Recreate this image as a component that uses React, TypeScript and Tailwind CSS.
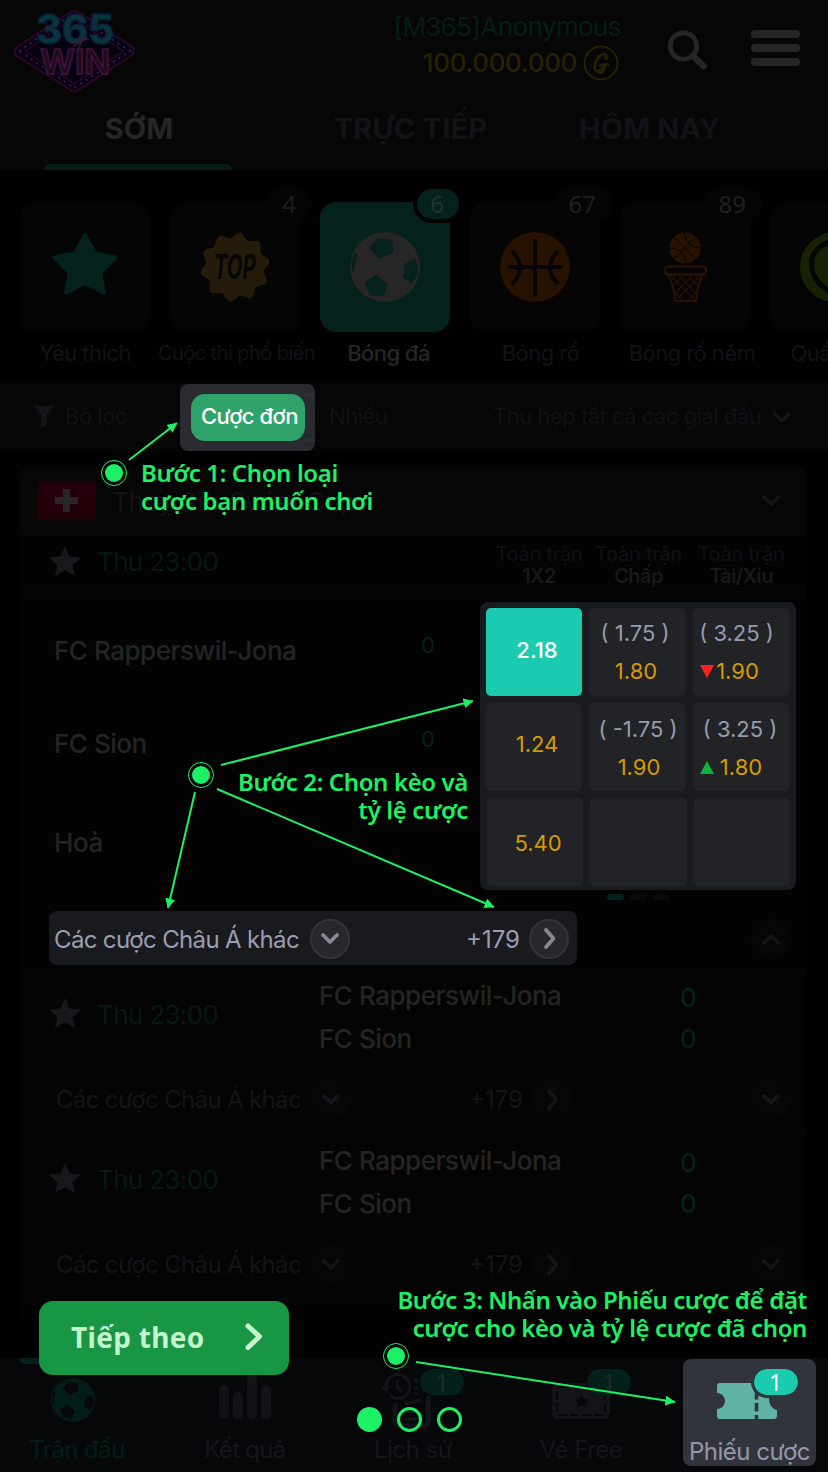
import React from "react";

type IconProps = { className?: string };

function Chevron({ dir, className }: { dir: "down" | "up" | "right"; className?: string }) {
  const d = { down: "M2 2 L9 9 L16 2", up: "M2 9 L9 2 L16 9", right: "M6 -3 L13.5 5.5 L6 14" }[dir];
  return (
    <svg className={className} width="18" height="11" viewBox="0 0 18 11" overflow="visible" fill="none" stroke="currentColor" strokeWidth="3.800" strokeLinecap="round" strokeLinejoin="round">
      <path d={d} />
    </svg>
  );
}

function StarIcon({ className }: IconProps) {
  return (
    <svg className={className} viewBox="0 0 70 70" fill="currentColor" stroke="currentColor" strokeWidth="4" strokeLinejoin="round">
      <path d="M35 3 L45 21.5 L65.5 25.5 L50.3 40.8 L53.8 60.5 L35 51 L16.2 60.5 L19.7 40.8 L4.5 25.5 L25 21.5 Z" />
    </svg>
  );
}

function SmallStar({ className }: IconProps) {
  return (
    <svg className={className} width="32" height="30" viewBox="0 0 32 30" fill="currentColor">
      <path d="M16 0 L20.6 10.4 L32 11.6 L23.6 19.3 L26 30 L16 24.6 L6 30 L8.4 19.3 L0 11.6 L11.4 10.4 Z" />
    </svg>
  );
}

function SoccerIcon({ size, patch }: { size: number; patch: string }) {
  return (
    <svg width={size} height={size} viewBox="0 0 70 70">
      <circle cx="35" cy="35" r="35" fill="currentColor" />
      <g fill={patch} stroke={patch} strokeWidth="1" strokeLinejoin="round">
        <path d="M20 16.3 L27.5 6.3 L41.5 8.2 L43 20.3 L28.7 26 Z" />
        <path d="M26.3 43.5 L37 52.7 L33.2 63.7 L20.9 62.8 L15 50.2 Z" />
        <path d="M55.5 32 L64.6 27.5 Q68 34 67.5 41 L62 51.3 L53.5 45.6 Z" />
        <path d="M4.5 22 Q7.5 20 6.5 24 Q4.5 30 4 38 Q2.5 41 2 38 Q1.5 29 4.5 22 Z" />
      </g>
    </svg>
  );
}

function TopIcon() {
  const pts = Array.from({ length: 61 }, (_, i) => {
    const a = (i / 60) * Math.PI * 2;
    const r = 32 + 3 * Math.cos(10 * (a + 1.43));
    return `${(35 + r * Math.cos(a)).toFixed(1)} ${(35 + r * Math.sin(a)).toFixed(1)}`;
  });
  return (
    <svg width="70" height="70" viewBox="0 0 70 70">
      <path d={`M${pts.join("L")}Z`} fill="#241b0a" />
      <text x="35" y="47.500" textAnchor="middle" transform="translate(13.700 0) scale(.6 1)" className="font-['Inter'] text-[34px] font-bold italic" fill="#060606">TOP</text>
    </svg>
  );
}

function BasketballIcon() {
  return (
    <svg width="70" height="70" viewBox="0 0 70 70">
      <circle cx="35" cy="35" r="35" fill="#271202" />
      <path d="M35 9 V62 M9 35 H61 M13 20 Q27 35 13 51 M57 20 Q43 35 57 51" fill="none" stroke="#060606" strokeWidth="4" strokeLinecap="round" />
    </svg>
  );
}

function HoopIcon() {
  return (
    <svg width="70" height="70" viewBox="0 0 70 70">
      <circle cx="35" cy="16" r="15.7" fill="#271202" />
      <path d="M24 5 L46 27 M24 27 L46 5 M34 0 Q36 16 51 16 M19 16 Q35 16 36 32" fill="none" stroke="#060606" strokeWidth="1" />
      <g fill="none" stroke="#271202">
        <rect x="15" y="34.500" width="41" height="8" rx="3" strokeWidth="2.500" />
        <path d="M18 43 Q24 53 25 69 H46 Q47 53 53 43" strokeWidth="2" />
        <path d="M20 43 L45 68 M28 43 L47 62 M37 43 L49 55 M45 43 L51 49 M51 43 L26 68 M43 43 L24 62 M34 43 L22 55 M26 43 L21 49 M24.500 60 L32 68 M46.500 60 L39 68" strokeWidth="1.100" />
      </g>
    </svg>
  );
}

function TennisIcon() {
  return (
    <svg width="70" height="70" viewBox="0 0 70 70">
      <circle cx="35" cy="35" r="35" fill="#182104" />
      <path d="M34 9 C4 14 4 48 34 62" fill="none" stroke="#060606" strokeWidth="5" />
    </svg>
  );
}

function TicketIcon() {
  return (
    <svg width="60" height="36" viewBox="0 0 60 36">
      <path d="M3 0 H34 Q36 9 41.500 13 L52 15 Q52 25 60 27 V33 Q60 36 57 36 H3 Q0 36 0 33 V26 A8 8 0 0 0 0 10 V3 Q0 0 3 0 Z" fill="#61b3a8" />
      <path d="M37.700 8 H41.300 V16.500 H37.700 Z M37.700 20 H41.300 V28.500 H37.700 Z M37.700 32 H41.300 V36 H37.700 Z" fill="#32343c" />
    </svg>
  );
}

function FreeTicketIcon() {
  return (
    <svg width="60" height="36" viewBox="0 0 60 36">
      <path d="M4 0 H56 Q57 3 60 4 L58 8 L60 12 L58 16 L60 20 L58 24 L60 28 L58 31 Q57 33 56 36 H4 Q3 33 0 32 L2 28 L0 24 L2 20 L0 16 L2 12 L0 8 L2 4 Z" fill="#121418" />
      <rect x="6" y="4" width="48" height="28" rx="3" fill="none" stroke="#060709" strokeWidth="2" strokeDasharray="9 3" />
      <path d="M30.500 11 L32.500 16 L38 16.300 L34 20 L35.300 25 L30.500 22 L26 25 L27.200 20 L23 16.300 L28.500 16 Z" fill="#060709" />
    </svg>
  );
}

function HistoryIcon() {
  return (
    <svg width="56" height="58" viewBox="0 0 56 58" fill="none" stroke="#121418">
      <path d="M5 15 A12 12 0 1 1 9.500 24" strokeWidth="3" />
      <path d="M-1 14 H11 L5 20.500 Z" fill="#121418" stroke="none" />
      <path d="M16.500 8 V16 L21 19.500" strokeWidth="2.500" />
      <path d="M35 7 V11 M35 15 V18 M35 20.500 V23" strokeWidth="4" />
      <path d="M14 31 V48 Q14 54 20 54 H42 Q47.500 54 47.500 48 V24" strokeWidth="5" />
      <path d="M24 32 L40 28 M22 40 H40 M24 47 H38" strokeWidth="3.500" />
    </svg>
  );
}

function Logo() {
  const bulbs = "M19 51 L72 14 L130 51 L74 88 Z";
  return (
    <svg width="124" height="86" viewBox="12 8 124 86" overflow="visible">
      <path d="M17 47 L69 13 Q74 9 80 13 L131 46 Q137 51 131 56 L80 89 Q74 94 69 89 L17 56 Q12 51 17 47 Z" fill="#0a0318" stroke="#2c0724" strokeWidth="2" />
      <path d={bulbs} fill="#03020f" stroke="#2c0724" strokeWidth="1.500" transform="translate(9 6.200) scale(.88)" />
      <path d={bulbs} fill="none" stroke="#30364a" strokeWidth="1.600" strokeDasharray="1.600 5" />
      <text x="36" y="44" textLength="78" lengthAdjust="spacingAndGlyphs" className="font-['Inter'] text-[41px] font-extrabold" fill="#0b333d" stroke="#061f38" strokeWidth="1.300">365</text>
      <text x="40" y="74" textLength="70" lengthAdjust="spacingAndGlyphs" className="font-['Inter'] text-[34px] font-bold" fill="#220a1e" stroke="#431440" strokeWidth="1.400">WIN</text>
      <path d="M71 43 L89 39 M73 47 L87 37 M79 48 L83 37" stroke="#3a1c35" strokeWidth="1.500" />
    </svg>
  );
}

function Header() {
  return (
    <header className="h-[170px] bg-[#060606]">
      <div className="flex h-[100px] items-start pl-3">
        <div className="pt-2"><Logo /></div>
        <div className="ml-auto flex flex-col items-end pt-[9px]">
          <div className="text-[26px] leading-9 tracking-[-0.6px] text-[#031d18]">[M365]Anonymous</div>
          <div className="mr-[2px] flex h-9 items-center gap-[6px] text-[26px] font-medium leading-9 text-[#262200]">
            <span className="tracking-[-0.35px]">100.000.000</span>
            <svg width="36" height="36" viewBox="0 0 36 36">
              <circle cx="18" cy="18" r="16.500" fill="none" stroke="#262200" strokeWidth="2" />
              <path d="M24 12 C25 14 22 15 23 11 C22 6 13 12 12 20 C10 29 19 27 21 21 M17 20.500 Q21 19 25 19.500 M22 20 Q21 28 17 28" fill="none" stroke="#262200" strokeWidth="2.700" strokeLinecap="round" />
            </svg>
          </div>
        </div>
        <svg className="ml-[46px] mt-[29px]" width="41" height="42" viewBox="0 0 41 42" fill="none" stroke="#262626">
          <circle cx="16.500" cy="17" r="13.200" strokeWidth="4.800" />
          <path d="M26 27 L36.500 37" strokeWidth="6.500" strokeLinecap="round" />
        </svg>
        <div className="ml-[43px] mr-7 mt-[30px] flex w-[49px] flex-col gap-[6px]">
          {[0, 1, 2].map((i) => <div key={i} className="h-2 rounded-full bg-[#262626]" />)}
        </div>
      </div>
      <nav className="flex h-[70px] pl-[44px] text-[29px] font-bold leading-[58px] text-[#121317]">
        <div className="flex w-[188px] flex-col items-center justify-between">
          <span className="-mr-[2px] text-[#262626]">SỚM</span>
          <span className="h-[6px] w-full rounded-t-md bg-[#0a1c1a]" />
        </div>
        <div className="w-[357px] text-center tracking-[0.2px]">TRỰC TIẾP</div>
        <div className="w-[122px] whitespace-nowrap"><span className="-ml-[10px] tracking-[0.1px]">HÔM NAY</span></div>
      </nav>
    </header>
  );
}

type Sport = { label: string; icon: React.ReactNode; count?: string; active?: boolean; labelClass: string };

const sports: Sport[] = [
  { label: "Yêu thích", icon: <StarIcon className="size-[70px] text-[#05211c]" />, labelClass: "text-[22px]" },
  { label: "Cuộc thi phổ biến", icon: <TopIcon />, count: "4", labelClass: "text-[20px] ml-[3px]" },
  { label: "Bóng đá", icon: <SoccerIcon size={70} patch="#05211c" />, count: "6", active: true, labelClass: "text-[22px] ml-[7px] font-medium text-[#262626]" },
  { label: "Bóng rổ", icon: <BasketballIcon />, count: "67", labelClass: "text-[22px] ml-[11px]" },
  { label: "Bóng rổ ném", icon: <HoopIcon />, count: "89", labelClass: "text-[22px] ml-[14px]" },
  { label: "Quần vợt", icon: <TennisIcon />, labelClass: "text-[22px]" },
];

function Sports() {
  return (
    <section className="flex h-[213px] gap-5 overflow-hidden bg-[#010101] pl-5 pt-8 text-[#111216]">
      {sports.map((s) => (
        <div key={s.label} className="flex w-[130px] shrink-0 flex-col items-center">
          <div className={s.active ? "relative flex size-[130px] items-center justify-center rounded-2xl bg-[#05211c] text-[#262626]" : "relative flex size-[130px] items-center justify-center rounded-2xl bg-[#050505]"}>
            {s.icon}
            {s.count && (
              <span className={s.active
                ? "absolute -right-[13px] -top-[17px] flex h-[38px] w-[50px] items-center justify-center rounded-full border-4 border-[#010101] bg-[#05211c] pr-[2px] font-['Noto_Sans'] text-[24px] text-[#24312f]"
                : "absolute -right-[12px] -top-[17px] flex h-[38px] min-w-[46px] items-center justify-center rounded-full border-4 border-[#030404] bg-[#050505] px-3 font-['Noto_Sans'] text-[24px] text-[#1e1f20]"}>
                {s.count}
              </span>
            )}
          </div>
          <div className={`whitespace-nowrap leading-[42px] tracking-[-0.55px] ${s.labelClass}`}>{s.label}</div>
        </div>
      ))}
    </section>
  );
}

function FilterBar() {
  return (
    <section className="flex h-[68px] items-center bg-[#060606] pl-5 text-[22px] tracking-[-0.5px] text-[#101114]">
      <div className="flex h-[47px] w-[135px] items-center rounded-2xl border border-[#080808] pl-[13px]">
        <svg width="20" height="22" viewBox="0 0 20 22" fill="#131417"><path d="M0 0 H20 L13 9 V18 L7 22 V9 Z" /></svg>
        <span className="-mt-[2px] ml-[11px]">Bộ lọc</span>
      </div>
      <div className="ml-[25px] flex h-[67px] w-[135px] items-center rounded-lg bg-[#2a2b30]">
        <div className="ml-[11px] flex h-[47px] w-[114px] items-center justify-center rounded-[14px] bg-[#2fa369] text-[22px] font-medium text-white"><span className="-mt-[2px] ml-[3px]">Cược đơn</span></div>
        <div className="h-[47px] flex-1 border-y-2 border-[#313237]" />
      </div>
      <div className="flex h-[47px] w-[103px] items-center rounded-r-2xl border border-l-0 border-[#080808] pb-[2px] pl-[14px]">Nhiều</div>
      <div className="ml-[62px] flex h-[47px] w-[325px] items-center rounded-2xl border border-[#080808] pl-3">
        <span className="-mt-[2px] whitespace-nowrap">Thu hẹp tất cả các giải đấu</span>
        <Chevron dir="down" className="ml-3 text-[#15161a]" />
      </div>
    </section>
  );
}

function RoundButton({ dir, lit }: { dir: "down" | "up" | "right"; lit?: boolean }) {
  return (
    <span className={lit
      ? "flex size-10 shrink-0 items-center justify-center rounded-full border-2 border-[#333439] bg-[#27282c] text-[#868892]"
      : "flex size-10 shrink-0 items-center justify-center rounded-full border border-[#080808] bg-[#060606] text-[#141519]"}>
      <Chevron dir={dir} />
    </span>
  );
}

function OddsCell({ line, price, trend, className }: { line?: string; price?: string; trend?: "up" | "down"; className?: string }) {
  return (
    <div className={`flex h-[88px] flex-col items-center justify-center rounded-[5px] ${className ?? ""}`}>
      {line && <div className="-ml-[2px] whitespace-pre text-[22px] leading-[38px] text-[#989cae]">{line}</div>}
      {price && (
        <div className="relative flex items-center text-[22px] leading-[38px]">
          {trend && (
            <svg className={trend === "up" ? "absolute -left-[20px]" : "absolute -left-[16px]"} width="14" height="13" viewBox="0 0 14 13">
              <path d={trend === "up" ? "M0 13 L7 0 L14 13 Z" : "M0 0 H14 L7 13 Z"} fill={trend === "up" ? "#0cb43b" : "#ff2020"} />
            </svg>
          )}
          {price}
        </div>
      )}
    </div>
  );
}

function OddsBoard() {
  return (
    <div className="flex h-[288px] w-[316px] flex-col gap-[7px] rounded-lg bg-[#1a1b1f] p-[6px] text-[#d59a04]">
      <div className="grid grid-cols-[96px_97px_97px] gap-[7px]">
        <OddsCell price="2.18" className="bg-[#1acbb0] pb-1 pl-[6px] font-medium text-white" />
        <OddsCell line="( 1.75 )" price="1.80" className="bg-[#222326] pr-[3px]" />
        <OddsCell line="( 3.25 )" price="1.90" trend="down" className="bg-[#222326] pr-[8px]" />
      </div>
      <div className="grid grid-cols-[96px_97px_97px] gap-[7px]">
        <OddsCell price="1.24" className="bg-[#222326] pb-[6px] pl-[6px]" />
        <OddsCell line="( -1.75 )" price="1.90" className="bg-[#222326] pl-[3px] pt-[2px]" />
        <OddsCell line="( 3.25 )" price="1.80" trend="up" className="bg-[#222326] pr-[1px] pt-[2px]" />
      </div>
      <div className="ml-px grid grid-cols-[96px_97px_96px] gap-[7px]">
        <OddsCell price="5.40" className="bg-[#222326] pl-[6px] pt-[2px]" />
        <OddsCell className="bg-[#222326]" />
        <OddsCell className="bg-[#222326]" />
      </div>
    </div>
  );
}

function CollapsedMatch() {
  return (
    <article className="h-[165px] border-b-2 border-[#060606] bg-[#040404]">
      <div className="flex h-[94px] pl-[29px]">
        <SmallStar className="mt-[28px] text-[#17181c]" />
        <span className="ml-4 w-[222px] pt-[27px] text-[26px] leading-9 tracking-[-0.65px] text-[#041910]">Thu 23:00</span>
        <div className="w-[361px] pt-[4px] text-[26px] font-medium leading-[43px] tracking-[-0.47px] text-[#242424]">
          <div>FC Rapperswil-Jona</div>
          <div>FC Sion</div>
        </div>
        <div className="pt-[7px] text-[26px] font-medium leading-[41px] text-[#04201b]">
          <div>0</div>
          <div>0</div>
        </div>
      </div>
      <div className="mx-[40px] mr-[68px] h-px bg-[#070707]" />
      <div className="flex h-[68px] items-center pl-[36px] text-[24px] text-[#131417]">
        <span className="w-[255px] whitespace-nowrap pt-[2px] tracking-[-0.65px]">Các cược Châu Á khác</span>
        <RoundButton dir="down" />
        <span className="ml-[118px] w-[63px] pt-[2px]">+179</span>
        <RoundButton dir="right" />
        <span className="ml-auto mr-[15px]"><RoundButton dir="down" /></span>
      </div>
    </article>
  );
}

function League() {
  return (
    <section className="mx-5 mt-4 w-[786px] rounded-t-lg bg-[#030303] pb-[20px]">
      <div className="flex h-[68px] items-center rounded-t-lg border-b-2 border-[#070707] bg-[#060606] pl-[17px]">
        <svg width="59" height="39" viewBox="0 0 59 39"><rect width="59" height="39" fill="#210008" /><path d="M18 16 H26 V8 H33 V16 H41 V23 H33 V31 H26 V23 H18 Z" fill="#262626" /></svg>
        <span className="ml-4 mt-[3px] text-[26px] tracking-[-0.3px] text-[#121317]">Thuỵ Sĩ - Swiss Cup</span>
        <span className="ml-auto mr-[15px]"><RoundButton dir="down" /></span>
      </div>
      <div className="flex h-[58px] border-b-2 border-[#070707] pl-[29px] text-[20px] leading-[22px] text-[#101116]">
        <SmallStar className="mt-[11px] text-[#17181c]" />
        <span className="ml-4 mt-[9px] w-[392px] text-[26px] leading-9 tracking-[-0.65px] text-[#041910]">Thu 23:00</span>
        {[["Toàn trận", "1X2", "w-[100px]"], ["Toàn trận", "Chấp", "w-[99px]"], ["Toàn trận", "Tài/Xỉu", "w-[106px]"]].map(([a, b, w]) => (
          <div key={b} className={`${w} pt-[8px] text-center tracking-[-0.25px]`}>
            <div>{a}</div>
            <div className="font-semibold tracking-[-0.6px] text-[#17181a]">{b}</div>
          </div>
        ))}
      </div>
      <div className="flex h-[318px] pl-[34px] pt-[9px]">
        <div className="w-[367px] pt-[26px] text-[26px] font-medium tracking-[-0.47px] text-[#242424]">
          <div className="h-[93px] leading-[46px]">FC Rapperswil-Jona</div>
          <div className="h-[99px] leading-[46px]">FC Sion</div>
          <div className="leading-[46px]">Hoà</div>
        </div>
        <div className="w-[59px] pt-[23px] text-[22px] text-[#04201b]">
          <div className="h-[94px] leading-[40px]">0</div>
          <div className="leading-[40px]">0</div>
        </div>
        <div className="flex flex-col items-center">
          <OddsBoard />
          <div className="mt-1 flex gap-[6px]">
            <span className="h-[6px] w-[17px] rounded-full bg-[#04201b]" />
            <span className="h-[6px] w-[17px] rounded-full bg-[#0a0a0a]" />
            <span className="h-[6px] w-[17px] rounded-full bg-[#0a0a0a]" />
          </div>
        </div>
      </div>
      <div className="flex h-[59px] border-b-2 border-[#060606] pl-[29px]">
        <div className="flex h-[54px] w-[528px] items-center rounded-lg bg-[#191a1e] pl-[5px] text-[24px] text-[#9a9eb0]">
          <span className="w-[256px] whitespace-nowrap pt-[4px] tracking-[-0.65px]">Các cược Châu Á khác</span>
          <span className="pt-px"><RoundButton dir="down" lit /></span>
          <span className="ml-[116px] w-[63px] pt-[4px]">+179</span>
          <span className="pt-px"><RoundButton dir="right" lit /></span>
        </div>
        <span className="ml-auto mr-[15px] mt-[8px]"><RoundButton dir="up" /></span>
      </div>
      <CollapsedMatch />
      <CollapsedMatch />
    </section>
  );
}

function BottomNav() {
  const badge = "absolute left-1/2 flex h-[26px] w-[44px] items-center justify-center rounded-full font-['Noto_Sans'] text-[23px] leading-none tracking-normal";
  return (
    <nav className="-mx-[7px] mt-auto grid h-[114px] w-[842px] shrink-0 grid-cols-[repeat(5,168px)] bg-[#060709] text-center text-[24px] tracking-[-0.5px] text-[#15161a]">
      <div className="relative flex flex-col items-center text-[#041c18]">
        <span className="absolute left-[26px] top-0 h-[6px] w-[116px] rounded-b-md bg-[#04201b]" />
        <span className="mr-[8px] mt-[20px] h-[54px]"><SoccerIcon size={44} patch="#060709" /></span>
        <span className="leading-9">Trận đấu</span>
      </div>
      <div className="flex flex-col items-center">
        <span className="mt-[14px] flex h-[47px] items-end gap-[4px]">
          <i className="h-[34px] w-[10px] rounded-full bg-[#121317]" />
          <i className="h-[27px] w-[10px] rounded-full bg-[#121317]" />
          <i className="h-[47px] w-[10px] rounded-full bg-[#121317]" />
          <i className="h-[34px] w-[10px] rounded-full bg-[#121317]" />
        </span>
        <span className="mt-[13px] leading-9 tracking-[-0.7px]">Kết quả</span>
      </div>
      <div className="relative flex flex-col items-center">
        <span className="ml-[-8px] mt-[14px] h-[60px]"><HistoryIcon /></span>
        <span className="leading-9">Lịch sử</span>
        <span className={`${badge} top-[11px] ml-[7px] bg-[#04201b] text-[#202b2a]`}>1</span>
      </div>
      <div className="relative flex flex-col items-center">
        <span className="mt-[25px] h-[49px]"><FreeTicketIcon /></span>
        <span className="leading-9">Vé Free</span>
        <span className={`${badge} top-[11px] ml-[6px] bg-[#04201b] text-[#202b2a]`}>1</span>
      </div>
      <div className="relative ml-[18px] mt-px flex h-[107px] w-[133px] flex-col items-center rounded-lg bg-[#32343c] text-[#9598ab]">
        <span className="mr-[5px] mt-6 h-[52px] shrink-0"><TicketIcon /></span>
        <span className="whitespace-nowrap leading-[34px]">Phiếu cược</span>
        <span className={`${badge} top-[10px] ml-[4px] bg-[#1acbb0] text-white outline-3 outline-[#32343c]`}>1</span>
      </div>
    </nav>
  );
}

const arrows = [
  [129, 460, 177, 423],
  [221, 765, 473, 701],
  [195, 792, 168, 908],
  [217, 789, 494, 907],
  [416, 1362, 675, 1402],
];
const markers = [[114, 473], [201, 775], [396, 1356]];

function Guide() {
  return (
    <div className="pointer-events-none absolute inset-0 font-['Noto_Sans',sans-serif] text-[24px] font-semibold leading-7 tracking-[-0.38px] text-[#1cf165]">
      <svg className="absolute inset-0" width="828" height="1472" fill="none" stroke="currentColor">
        <defs>
          <marker id="tip" markerWidth="10" markerHeight="10" refX="9.500" refY="5" orient="auto" markerUnits="userSpaceOnUse">
            <path d="M0 0 L10 5 L0 10 Z" fill="#1cf165" stroke="none" />
          </marker>
        </defs>
        {arrows.map(([x1, y1, x2, y2]) => <line key={y2} x1={x1} y1={y1} x2={x2} y2={y2} strokeWidth="2" markerEnd="url(#tip)" />)}
        {markers.map(([x, y]) => (
          <g key={x}>
            <circle cx={x} cy={y} r="12.500" strokeWidth="1" fill="#020202" />
            <circle cx={x} cy={y} r="9" fill="currentColor" stroke="none" />
          </g>
        ))}
      </svg>
      <p className="absolute left-[141px] top-[459px] whitespace-nowrap">Bước 1: Chọn loại<br />cược bạn muốn chơi</p>
      <p className="absolute right-[360px] top-[768px] whitespace-nowrap text-right">Bước 2: Chọn kèo và<br />tỷ lệ cược</p>
      <p className="absolute right-[21px] top-[1286px] whitespace-nowrap text-right">Bước 3: Nhấn vào Phiếu cược để đặt<br />cược cho kèo và tỷ lệ cược đã chọn</p>
      <button className="absolute left-[39px] top-[1301px] flex h-[74px] w-[250px] items-center rounded-[14px] bg-[#199643] pl-8 text-[28px] font-bold tracking-[0.3px] text-[#c5f5cf]">
        <span className="-mt-[2px]">Tiếp theo</span>
        <svg className="absolute left-[206px] top-[21px]" width="18" height="30" viewBox="0 0 18 30" fill="none" stroke="currentColor" strokeWidth="5" strokeLinecap="round" strokeLinejoin="round"><path d="M3 4 L14.500 14.500 L3 25.500" /></svg>
      </button>
      <div className="absolute left-[357px] top-[1407px] flex gap-[15px]">
        <span className="size-[25px] rounded-full bg-[#1cf165]" />
        <span className="size-[25px] rounded-full border-3 border-[#1cf165]" />
        <span className="size-[25px] rounded-full border-3 border-[#1cf165]" />
      </div>
    </div>
  );
}

export default function App() {
  return (
    <div className="relative flex h-[1472px] w-[828px] flex-col overflow-hidden bg-[#010101] font-['Inter',sans-serif]">
      <Header />
      <Sports />
      <FilterBar />
      <League />
      <BottomNav />
      <Guide />
    </div>
  );
}
